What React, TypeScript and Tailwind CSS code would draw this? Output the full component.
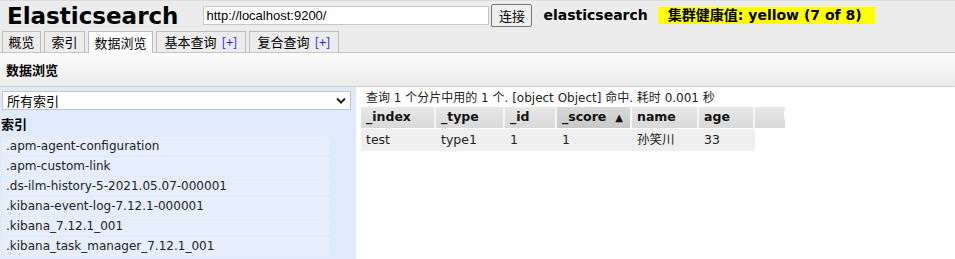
const indices = [
  '.apm-agent-configuration',
  '.apm-custom-link',
  '.ds-ilm-history-5-2021.05.07-000001',
  '.kibana-event-log-7.12.1-000001',
  '.kibana_7.12.1_001',
  '.kibana_task_manager_7.12.1_001',
];

const tabs = [
  { label: '概览', w: 'w-[39px]' },
  { label: '索引', w: 'w-[41px]' },
  { label: '数据浏览', w: 'w-[65px]', active: true },
  { label: '基本查询', plus: true, w: 'w-[90px]' },
  { label: '复合查询', plus: true, w: 'w-[90px]' },
];

const columns = [
  { label: '_index', w: 'w-[75px]' },
  { label: '_type', w: 'w-[69px]' },
  { label: '_id', w: 'w-[52px]' },
  { label: '_score', w: 'w-[75px]', sorted: true },
  { label: 'name', w: 'w-[67px]' },
  { label: 'age', w: 'w-[56px]' },
];

const row = ['test', 'type1', '1', '1', '孙笑川', '33'];

export default function App() {
  return (
    <div
      className="w-[955px] h-[259px] overflow-hidden bg-white text-[12px] text-[#222]"
      style={{ fontFamily: '"DejaVu Sans", "Noto Sans CJK SC", sans-serif' }}
    >
      {/* header */}
      <div className="bg-[#ececec] border-t border-[#dcdcdc] border-b border-b-[#c4c4c4] h-[53px] flex flex-col">
        <div className="flex items-center h-[30px] pl-[7px]">
          <h1 className="text-[23px] font-bold leading-none text-black mt-[1px]">Elasticsearch</h1>
          <input
            readOnly
            value="http://localhost:9200/"
            className="ml-[25px] w-[286px] h-[19px] border border-[#c8c8c8] bg-white px-[2px] text-[13px] text-black outline-none"
            style={{ fontFamily: '"Liberation Sans", sans-serif' }}
          />
          <button className="ml-[2px] h-[23px] w-[41px] border border-[#767676] rounded-[2px] bg-[#efefef] text-[13px] text-black" style={{ fontFamily: '"Noto Sans CJK SC", sans-serif' }}>
            连接
          </button>
          <span className="ml-[11px] text-[14px] font-bold text-black">elasticsearch</span>
          <span className="ml-[10px] h-[17px] w-[217px] bg-[#ffff00] pl-[10px] text-[14px] font-bold leading-[17px] text-black">
            集群健康值: yellow (7 of 8)
          </span>
        </div>
        <div className="flex items-end gap-[3px] pl-[2px] h-[22px]">
          {tabs.map((t) => (
            <div
              key={t.label}
              className={`${t.w} ${t.active ? 'h-[22px] bg-white -mb-[1px]' : 'h-[21px] bg-[#ececec]'} border border-b-0 border-[#bdbdbd] flex items-end justify-center pb-[1px] text-[13px] text-black`}
              style={{ fontFamily: '"Noto Sans CJK SC", sans-serif' }}
            >
              {t.label}
              {t.plus && <span className="ml-[5px] text-[#2020ff]">[+]</span>}
            </div>
          ))}
        </div>
      </div>

      {/* section bar */}
      <div className="h-[34px] bg-gradient-to-b from-[#fcfcfc] to-[#ececec] border-b border-[#cfcfcf] flex items-center pl-[6px]">
        <span className="text-[13px] font-bold text-black" style={{ fontFamily: '"Noto Sans CJK SC", sans-serif' }}>数据浏览</span>
      </div>

      {/* body */}
      <div className="flex">
        <div className="w-[356px] h-[172px] bg-[#dfeafb] pt-[4px]">
          <div className="ml-[2px] w-[349px] h-[19px] border border-[#c4c4c4] bg-white flex items-center justify-between px-[4px]">
            <span className="text-[13px] text-black" style={{ fontFamily: '"Noto Sans CJK SC", sans-serif' }}>所有索引</span>
            <svg width="10" height="7" viewBox="0 0 10 7">
              <path d="M1 1.5 L5 5.5 L9 1.5" fill="none" stroke="#222" strokeWidth="2" />
            </svg>
          </div>
          <div className="pl-[1px] pt-[4px] h-[23px] text-[13px] font-bold text-black" style={{ fontFamily: '"Noto Sans CJK SC", sans-serif' }}>索引</div>
          <div className="flex flex-col gap-[1px] pt-[4px]">
            {indices.map((n) => (
              <div key={n} className="ml-[1px] w-[329px] h-[19px] rounded-[3px] bg-[#e6eefc] pl-[5px] leading-[19px] text-[12px] text-[#222]">
                {n}
              </div>
            ))}
          </div>
        </div>

        <div className="pl-[5px] pt-[3px]">
          <div className="pl-[5px] h-[17px] text-[12px] text-[#222] leading-[17px]">
            查询 1 个分片中用的 1 个. [object Object] 命中. 耗时 0.001 秒
          </div>
          <div className="flex h-[21px]">
            {columns.map((c) => (
              <div
                key={c.label}
                className={`${c.w} border-r-[2px] border-[#f6f6f6] ${c.sorted ? 'bg-gradient-to-b from-[#d8d8d8] to-[#c9c9c9]' : 'bg-gradient-to-b from-[#e8e8e8] to-[#d9d9d9]'} pl-[5px] flex items-center text-[12.5px] font-bold text-[#111]`}
              >
                {c.label}
                {c.sorted && <span className="ml-[9px] text-[10px]">▲</span>}
              </div>
            ))}
            <div className="w-[30px] bg-gradient-to-b from-[#e8e8e8] to-[#d9d9d9] flex justify-end">
              <div className="w-[1px] h-[8px] mt-[4px] bg-[#fff]" />
            </div>
          </div>
          <div className="flex h-[22px] w-fit bg-[#efefef] mt-[1px]">
            {row.map((v, i) => (
              <div key={i} className={`${columns[i].w} pl-[5px] flex items-center text-[12.5px] text-[#222]`}>
                {v}
              </div>
            ))}
          </div>
        </div>
      </div>
    </div>
  );
}
